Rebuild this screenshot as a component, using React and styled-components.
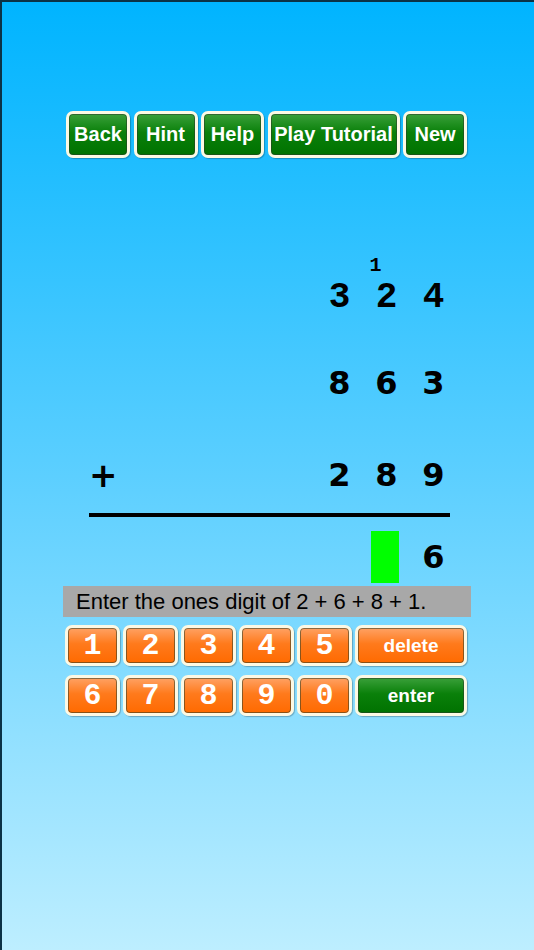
import React from "react";
import styled, { createGlobalStyle } from "styled-components";

const GlobalStyle = createGlobalStyle`
  html, body {
    margin: 0;
    padding: 0;
  }
  body {
    font-family: "Liberation Sans", Arial, sans-serif;
  }
`;

const Screen = styled.div`
  box-sizing: border-box;
  width: 534px;
  height: 950px;
  border-top: 2px solid #0b3246;
  border-left: 2px solid #0b3246;
  background: linear-gradient(180deg, #00b4ff 0%, #5ccfff 50%, #bdeeff 100%);
  display: flex;
  flex-direction: column;
  overflow: hidden;
`;

const Toolbar = styled.div`
  display: flex;
  gap: 3.5px;
  margin: 109px 0 0 64px;
  height: 47px;
`;

const Button = styled.button`
  box-sizing: border-box;
  width: ${(p) => p.$w || 64}px;
  height: 100%;
  padding: 0;
  border: 3px solid #fdf9e4;
  border-radius: 7px;
  box-shadow: inset 0 0 0 1px rgba(40, 60, 40, 0.55), 1px 1px 1px rgba(0, 0, 0, 0.25);
  background: ${(p) =>
    p.$tone === "orange"
      ? "linear-gradient(180deg, #ffa264 0%, #ff7a1c 45%, #ff6a00 100%)"
      : "linear-gradient(180deg, #3aa03a 0%, #0a800a 45%, #007200 100%)"};
  color: #fff;
  font-family: ${(p) =>
    p.$mono ? '"Liberation Mono", "Courier New", monospace' : '"Liberation Sans", Arial, sans-serif'};
  font-weight: bold;
  font-size: ${(p) => p.$size || 20}px;
  display: flex;
  align-items: center;
  justify-content: center;
  white-space: nowrap;
`;

const Problem = styled.div`
  margin: 98px 0 0 87px;
  width: 368px;
  display: flex;
  flex-direction: column;
`;

const Row = styled.div`
  display: grid;
  grid-template-columns: 1fr repeat(3, 47px);
  align-items: center;
  height: ${(p) => p.$h}px;
  margin-top: ${(p) => p.$top || 0}px;
`;

const Sign = styled.span`
  font-family: "DejaVu Sans", sans-serif;
  font-weight: bold;
  font-size: 34px;
  line-height: 1;
  color: #000;
`;

const Digit = styled.span`
  text-align: center;
  color: #000;
  font-weight: bold;
  line-height: 1;
  font-family: ${(p) =>
    p.$mono ? '"Liberation Mono", "Courier New", monospace' : '"DejaVu Sans", sans-serif'};
  font-size: ${(p) => p.$size || 32}px;
`;

const Carry = styled(Digit)`
  margin-left: -22px;
`;

const Rule = styled.div`
  width: 361px;
  height: 4px;
  background: #000;
  margin-top: 16px;
`;

const Cursor = styled.div`
  justify-self: center;
  width: 28px;
  height: 52px;
  background: #00ff00;
  margin-left: -4px;
`;

const Prompt = styled.div`
  box-sizing: border-box;
  margin: 3px 0 0 61px;
  width: 408px;
  height: 31px;
  background: #a8a8a8;
  padding-left: 13px;
  display: flex;
  align-items: center;
  font-family: "Liberation Sans", Arial, sans-serif;
  font-size: 22px;
  color: #000;
`;

const Keypad = styled.div`
  margin: 8px 0 0 63px;
  display: grid;
  grid-template-columns: repeat(5, 55px) 112px;
  grid-auto-rows: 41px;
  row-gap: 9px;
  column-gap: 3px;
`;

const tools = [
  { label: "Back", w: 64 },
  { label: "Hint", w: 64 },
  { label: "Help", w: 63 },
  { label: "Play Tutorial", w: 132 },
  { label: "New", w: 64 },
];

export default function App() {
  return (
    <>
      <GlobalStyle />
      <Screen>
        <Toolbar>
          {tools.map((t) => (
            <Button key={t.label} $w={t.w}>
              {t.label}
            </Button>
          ))}
        </Toolbar>

        <Problem>
          <Row $h={20}>
            <span />
            <span />
            <Carry $mono $size={20}>
              1
            </Carry>
            <span />
          </Row>
          <Row $h={44}>
            <span />
            <Digit $mono $size={36}>3</Digit>
            <Digit $mono $size={36}>2</Digit>
            <Digit $mono $size={36}>4</Digit>
          </Row>
          <Row $h={44} $top={41}>
            <span />
            <Digit>8</Digit>
            <Digit>6</Digit>
            <Digit>3</Digit>
          </Row>
          <Row $h={44} $top={48}>
            <Sign>+</Sign>
            <Digit>2</Digit>
            <Digit>8</Digit>
            <Digit>9</Digit>
          </Row>
          <Rule />
          <Row $h={52} $top={14}>
            <span />
            <span />
            <Cursor />
            <Digit>6</Digit>
          </Row>
        </Problem>

        <Prompt>Enter the ones digit of 2 + 6 + 8 + 1.</Prompt>

        <Keypad>
          {["1", "2", "3", "4", "5"].map((d) => (
            <Button key={d} $tone="orange" $mono $size={30} $w={55}>
              {d}
            </Button>
          ))}
          <Button $tone="orange" $size={19} $w={112}>
            delete
          </Button>
          {["6", "7", "8", "9", "0"].map((d) => (
            <Button key={d} $tone="orange" $mono $size={30} $w={55}>
              {d}
            </Button>
          ))}
          <Button $size={19} $w={112}>
            enter
          </Button>
        </Keypad>
      </Screen>
    </>
  );
}
